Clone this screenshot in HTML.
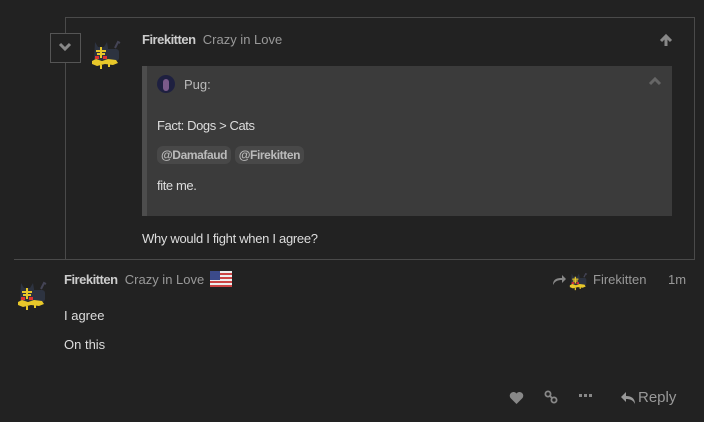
<!DOCTYPE html>
<html><head><meta charset="utf-8"><style>
body{margin:0;width:704px;height:422px;background:#222;position:relative;overflow:hidden;font-family:"Liberation Sans",sans-serif;font-size:13px;color:#ddd}
.a{position:absolute}
.name{font-weight:bold;color:#ccc;letter-spacing:-0.5px}
.title{color:#999}
.m{background:#484848;border-radius:6px;padding:2px 4px;color:#bbb;font-weight:bold;font-size:12px;letter-spacing:-0.4px}
</style></head><body>
<svg width="0" height="0" style="position:absolute"><defs><g id="cat"><path d="M24 12l3-6 2 1" stroke="#445" stroke-width="2" fill="none"/><path d="M4 6l3 5h6l3-5 1 6v12H3z" fill="#2d3340"/><rect x="14" y="13" width="14" height="12" rx="3" fill="#2d3340"/><rect x="5" y="14" width="10" height="2" fill="#e8c82a"/><rect x="6" y="17" width="8" height="2" fill="#e8c82a"/><rect x="9" y="11" width="2" height="11" fill="#e8c82a"/><rect x="4" y="20" width="4" height="3" fill="#d33"/><rect x="12" y="20" width="4" height="3" fill="#d33"/><path d="M1 25l4-2 6 2 6-2 8 1 2 3-5 2-8-1-8 2-5-2z" fill="#e8c82a"/><rect x="9" y="29" width="2" height="4" fill="#e8c82a"/><rect x="17" y="28" width="2" height="3" fill="#e8c82a"/></g></defs></svg>
<div class="a" style="left:65px;top:17px;width:628px;height:242px;border:1px solid #4a4a4a;border-bottom:none"></div>
<div class="a" style="left:14px;top:259px;width:680px;height:1px;background:#4a4a4a"></div>
<div class="a" style="left:50px;top:33px;width:29px;height:28px;border:1px solid #555;background:#222"></div>
<svg class="a" style="left:57px;top:41px" width="16" height="12"><path d="M3 3l5 5 5-5" stroke="#888" stroke-width="3" fill="none"/></svg>
<svg class="a" style="left:91px;top:36px" width="32" height="36" viewBox="0 0 32 36"><use href="#cat"/></svg>
<div class="a" style="left:142px;top:32px"><span class="name">Firekitten</span> <span class="title">&nbsp;Crazy in Love</span></div>
<svg class="a" style="left:659px;top:33px" width="14" height="14"><path d="M7 13V3M2 8l5-5 5 5" stroke="#888" stroke-width="3" fill="none"/></svg>
<div class="a" style="left:142px;top:66px;width:530px;height:150px;background:#3b3b3b;border-left:5px solid #4d4d4d;box-sizing:border-box"></div>
<div class="a" style="left:157px;top:75px;width:18px;height:18px;border-radius:50%;background:#1e2040;overflow:hidden"><div style="margin:4px 0 0 6px;width:6px;height:12px;background:#7a5a8a;border-radius:3px"></div></div>
<div class="a" style="left:184px;top:77px;color:#bbb">Pug:</div>
<svg class="a" style="left:648px;top:76px" width="14" height="10"><path d="M2 8l5-5 5 5" stroke="#666" stroke-width="3" fill="none"/></svg>
<div class="a" style="left:157px;top:118px;letter-spacing:-0.4px">Fact: Dogs &gt; Cats</div>
<div class="a" style="left:157px;top:147px"><span class="m">@Damafaud</span> <span class="m">@Firekitten</span></div>
<div class="a" style="left:157px;top:178px;letter-spacing:-0.4px">fite me.</div>
<div class="a" style="left:142px;top:231px;letter-spacing:-0.3px">Why would I fight when I agree?</div>
<svg class="a" style="left:17px;top:277px" width="32" height="36" viewBox="0 0 32 36"><use href="#cat"/></svg>
<div class="a" style="left:64px;top:272px"><span class="name">Firekitten</span> <span class="title">&nbsp;Crazy in Love</span></div>
<svg class="a" style="left:210px;top:271px" width="22" height="16"><rect width="22" height="16" fill="#eee"/><rect y="2" width="22" height="2" fill="#c44"/><rect y="6" width="22" height="2" fill="#c44"/><rect y="10" width="22" height="2" fill="#c44"/><rect y="14" width="22" height="2" fill="#c44"/><rect width="10" height="9" fill="#3b4a8a"/></svg>
<div class="a" style="left:64px;top:308px">I agree</div>
<div class="a" style="left:64px;top:337px">On this</div>
<svg class="a" style="left:551px;top:273px" width="16" height="13"><path d="M2 12C2 6 6 5 11 5V2l4 4-4 4V7C7 7 4 8 2 12z" fill="#888"/></svg>
<svg class="a" style="left:569px;top:270px" width="20" height="22" viewBox="0 0 32 36"><use href="#cat"/></svg>
<div class="a" style="left:593px;top:272px;color:#999">Firekitten</div>
<div class="a" style="left:668px;top:272px;color:#999">1m</div>
<svg class="a" style="left:509px;top:391px" width="15" height="13"><path d="M7.5 13L1.5 7A3.5 3.5 0 0 1 7.5 2.5 3.5 3.5 0 0 1 13.5 7z" fill="#888"/></svg>
<svg class="a" style="left:544px;top:390px" width="14" height="14"><circle cx="4" cy="4" r="2.6" stroke="#888" stroke-width="1.8" fill="none"/><circle cx="10" cy="10" r="2.6" stroke="#888" stroke-width="1.8" fill="none"/><path d="M5.5 5.5l3 3" stroke="#888" stroke-width="1.8"/></svg>
<svg class="a" style="left:579px;top:394px" width="13" height="4"><rect x="0" width="3" height="3" fill="#888"/><rect x="5" width="3" height="3" fill="#888"/><rect x="10" width="3" height="3" fill="#888"/></svg>
<svg class="a" style="left:620px;top:390px" width="16" height="14"><path d="M15 14C15 8 11 6 6 6V2L1 7l5 5V9C10 9 13 10 15 14z" fill="#999"/></svg>
<div class="a" style="left:638px;top:389px;color:#999;font-size:15px">Reply</div>
</body></html>
